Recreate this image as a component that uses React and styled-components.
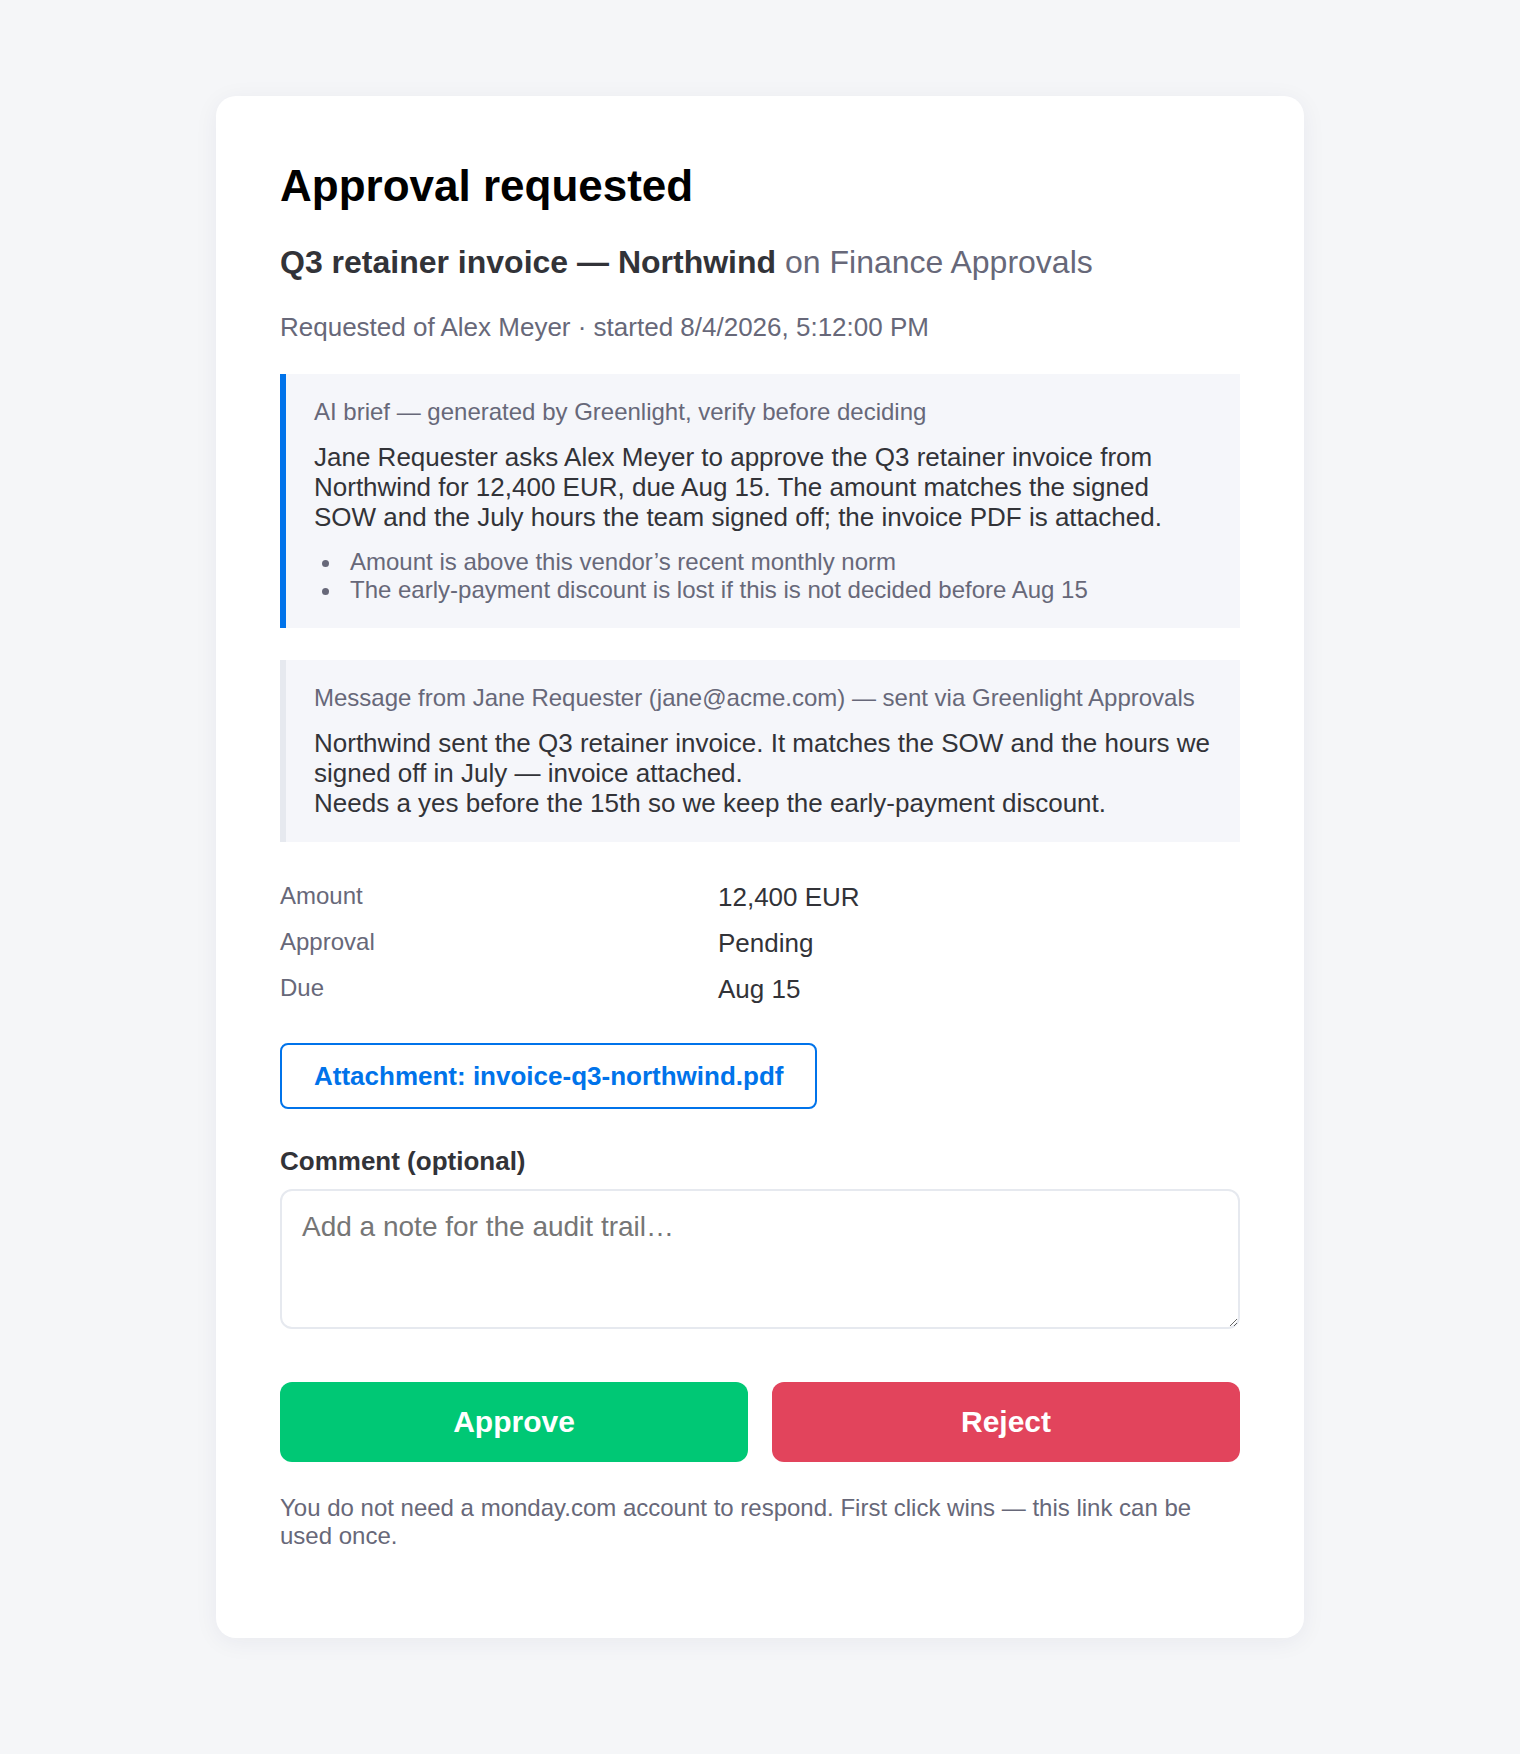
import React from "react";
import styled, { createGlobalStyle } from "styled-components";

// everything here is drawn at 2x the email's base sizes (13px body -> 26px)
const GlobalStyle = createGlobalStyle`
  html, body {
    margin: 0;
    padding: 0;
    min-height: 100%;
    background: #f5f6f8;
  }
  body {
    font-family: "Liberation Sans", Arial, sans-serif;
    font-size: 26px;
    line-height: 30px;
    color: #323338;
  }
`;

const Page = styled.div`
  min-height: 100vh;
  padding: 96px 0;
  box-sizing: border-box;
`;

const Card = styled.main`
  width: 1088px;
  margin: 0 auto;
  box-sizing: border-box;
  padding: 64px 64px 88px;
  background: #ffffff;
  border-radius: 20px;
  box-shadow: 0 4px 24px rgba(30, 40, 80, 0.06);
`;

const Title = styled.h1`
  margin: 0 0 32px;
  font-size: 44px;
  font-weight: 700;
  line-height: 52px;
  color: #000000;
`;

const Subject = styled.h2`
  margin: 0 0 32px;
  font-size: 32px;
  font-weight: 700;
  line-height: 36px;
  color: #323338;
`;

const Board = styled.span`
  font-weight: 400;
  color: #676879;
`;

const Meta = styled.p`
  margin: 0 0 32px;
  font-size: 26px;
  line-height: 30px;
  color: #676879;
`;

// quoted block — the accent colour is the only thing that changes
const Quote = styled.section`
  margin: 0 0 32px;
  padding: 24px 28px;
  background: #f5f6fa;
  border-left: 6px solid ${(p) => p.$accent};
`;

const QuoteLabel = styled.div`
  margin-bottom: 16px;
  font-size: 24px;
  line-height: 28px;
  color: #676879;
`;

const QuoteBody = styled.p`
  margin: 0;
  font-size: 26px;
  line-height: 30px;
  color: #323338;
`;

const Flags = styled.ul`
  margin: 16px 0 0;
  padding-left: 8px;
  list-style: none;
  font-size: 24px;
  line-height: 28px;
  color: #676879;
`;

const Flag = styled.li`
  display: flex;
  align-items: center;
  &::before {
    content: "";
    flex-shrink: 0;
    width: 7px;
    height: 7px;
    margin: 3px 21px 0 0;
    border-radius: 50%;
    background: #676879;
  }
`;

const Facts = styled.dl`
  display: grid;
  grid-template-columns: 438px 1fr;
  align-items: start;
  margin: 0 0 31px;
`;

const FactLabel = styled.dt`
  padding: 8px 0;
  font-size: 24px;
  line-height: 28px;
  color: #676879;
`;

const FactValue = styled.dd`
  margin: 0;
  padding: 8px 0;
  font-size: 26px;
  line-height: 30px;
  color: #323338;
`;

const Attachment = styled.a`
  display: block;
  width: fit-content;
  margin-bottom: 37px;
  padding: 16px 32px;
  border: 2px solid #0073ea;
  border-radius: 8px;
  font-size: 26px;
  font-weight: 700;
  line-height: 30px;
  color: #0073ea;
  text-decoration: none;
  cursor: pointer;
`;

const FieldLabel = styled.label`
  display: block;
  margin-bottom: 13px;
  font-size: 26px;
  font-weight: 700;
  line-height: 30px;
  color: #323338;
`;

const Comment = styled.textarea`
  display: block;
  width: 100%;
  box-sizing: border-box;
  margin: 0 0 53px;
  padding: 20px;
  border: 2px solid #e6e9ef;
  border-radius: 12px;
  font-family: "Liberation Sans", Arial, sans-serif;
  font-size: 28px;
  line-height: 32px;
  color: #323338;
  outline: none;
  &::placeholder {
    color: #767676;
  }
`;

const Actions = styled.div`
  display: grid;
  grid-template-columns: 1fr 1fr;
  gap: 24px;
`;

const Decision = styled.button`
  padding: 23px 0;
  border: none;
  border-radius: 12px;
  background: ${(p) => (p.$tone === "reject" ? "#e2445c" : "#00c875")};
  font-family: "Liberation Sans", Arial, sans-serif;
  font-size: 30px;
  font-weight: 700;
  line-height: 34px;
  color: #ffffff;
  cursor: pointer;
`;

const Footnote = styled.p`
  margin: 32px 0 0;
  font-size: 24px;
  line-height: 28px;
  color: #676879;
`;

const facts = [
  ["Amount", "12,400 EUR"],
  ["Approval", "Pending"],
  ["Due", "Aug 15"],
];

const flags = [
  "Amount is above this vendor’s recent monthly norm",
  "The early-payment discount is lost if this is not decided before Aug 15",
];

export default function App() {
  return (
    <Page>
      <GlobalStyle />
      <Card>
        <Title>Approval requested</Title>
        <Subject>
          Q3 retainer invoice — Northwind <Board>on Finance Approvals</Board>
        </Subject>
        <Meta>Requested of Alex Meyer · started 8/4/2026, 5:12:00 PM</Meta>

        <Quote $accent="#0073ea">
          <QuoteLabel>AI brief — generated by Greenlight, verify before deciding</QuoteLabel>
          <QuoteBody>
            Jane Requester asks Alex Meyer to approve the Q3 retainer invoice from
            Northwind for 12,400 EUR, due Aug 15. The amount matches the signed SOW
            and the July hours the team signed off; the invoice PDF is attached.
          </QuoteBody>
          <Flags>
            {flags.map((f) => (
              <Flag key={f}>{f}</Flag>
            ))}
          </Flags>
        </Quote>

        <Quote $accent="#e6e9ef">
          <QuoteLabel>
            Message from Jane Requester (jane@acme.com) — sent via Greenlight Approvals
          </QuoteLabel>
          <QuoteBody>
            Northwind sent the Q3 retainer invoice. It matches the SOW and the hours we
            signed off in July — invoice attached.
            <br />
            Needs a yes before the 15th so we keep the early-payment discount.
          </QuoteBody>
        </Quote>

        <Facts>
          {facts.map(([label, value]) => (
            <React.Fragment key={label}>
              <FactLabel>{label}</FactLabel>
              <FactValue>{value}</FactValue>
            </React.Fragment>
          ))}
        </Facts>

        <Attachment>Attachment: invoice-q3-northwind.pdf</Attachment>

        <FieldLabel htmlFor="comment">Comment (optional)</FieldLabel>
        <Comment id="comment" rows={3} placeholder="Add a note for the audit trail…" />

        <Actions>
          <Decision $tone="approve">Approve</Decision>
          <Decision $tone="reject">Reject</Decision>
        </Actions>

        <Footnote>
          You do not need a monday.com account to respond. First click wins — this link
          can be used once.
        </Footnote>
      </Card>
    </Page>
  );
}
